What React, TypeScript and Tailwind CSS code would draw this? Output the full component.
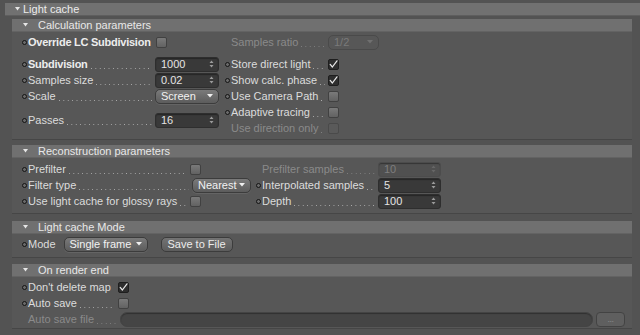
import React from "react";
import clsx from "clsx";

const Bullet = ({ show = true }: { show?: boolean }) => (
  <span className="flex w-[6px] shrink-0 items-center">
    {show && <span className="block h-[5px] w-[5px] rounded-full border border-[#141414] bg-[#6a6a6a]" />}
  </span>
);

interface LabelProps {
  text: string;
  className?: string;
  bold?: boolean;
  disabled?: boolean;
  leaders?: boolean;
}

// dotted leader line drawn as a repeating gradient, C4D style
const Label: React.FC<LabelProps> = ({ text, className, bold, disabled, leaders = true }) => (
  <div className={clsx("flex h-[13px] min-w-0 shrink-0 items-center whitespace-nowrap", className)}>
    <span
      className={clsx(
        "shrink-0",
        bold && "font-bold tracking-[-0.25px]",
        disabled ? "text-[#8a8a8a]" : bold ? "text-[#ededed]" : "text-[#dcdcdc]"
      )}
    >
      {text}
    </span>
    {leaders && (
      <span
        className={clsx(
          "mb-[2px] ml-[3px] mr-[3px] h-[1px] min-w-0 flex-1 self-end bg-[length:4.4px_1px] bg-repeat-x",
          disabled
            ? "bg-[linear-gradient(to_right,#808080_1px,transparent_1px)]"
            : "bg-[linear-gradient(to_right,#acacac_1px,transparent_1px)]"
        )}
      />
    )}
  </div>
);

const Spinner = ({ disabled }: { disabled?: boolean }) => (
  <svg width="5" height="8" viewBox="0 0 5 8" className="shrink-0">
    <path d="M2.5 0.5 L4.5 3 L0.5 3 Z M0.5 5 L4.5 5 L2.5 7.5 Z" fill={disabled ? "#666" : "#9c9c9c"} />
  </svg>
);

const NumField = ({ value, className, disabled }: { value: string; className?: string; disabled?: boolean }) => (
  <div
    className={clsx(
      "flex h-[15px] shrink-0 items-center justify-between rounded-[3px] border pl-[5px] pr-[4px] shadow-[inset_0_1px_1px_rgba(0,0,0,0.35)]",
      disabled ? "border-[#4c4c4c] bg-[#505050] text-[#7e7e7e]" : "border-[#2e2e2e] bg-[#393939] text-[#e4e4e4]",
      className
    )}
  >
    <span>{value}</span>
    <Spinner disabled={disabled} />
  </div>
);

const Caret = ({ color = "#f0f0f0" }: { color?: string }) => (
  <svg width="6" height="4" viewBox="0 0 6 4" className="shrink-0">
    <path d="M0 0 L6 0 L3 3.5 Z" fill={color} />
  </svg>
);

const Select = ({ value, className, disabled }: { value: string; className?: string; disabled?: boolean }) => (
  <div
    className={clsx(
      "flex h-[15px] shrink-0 items-center justify-between rounded-[5px] border pl-[5px] pr-[5px]",
      disabled
        ? "border-[#4a4a4a] bg-[#575757] text-[#7a7a7a]"
        : "border-[#3c3c3c] bg-gradient-to-b from-[#7a7a7a] to-[#5c5c5c] text-[#f2f2f2] shadow-[0_1px_0_rgba(255,255,255,0.08)]",
      className
    )}
  >
    <span>{value}</span>
    <Caret color={disabled ? "#707070" : "#f0f0f0"} />
  </div>
);

const Check = ({ checked, disabled, className }: { checked?: boolean; disabled?: boolean; className?: string }) => (
  <span
    className={clsx(
      "flex h-[11px] w-[11px] shrink-0 items-center justify-center rounded-[2px] border",
      checked
        ? "border-[#1e1e1e] bg-[#2e2e2e]"
        : disabled
          ? "border-[#4a4a4a] bg-[#5a5a5a]"
          : "border-[#414141] bg-gradient-to-b from-[#7a7a7a] to-[#626262]",
      className
    )}
  >
    {checked && (
      <svg width="9" height="8" viewBox="0 0 9 8">
        <path d="M1.2 4.4 L3.3 7 L8 0.8" stroke="#e8e8e8" strokeWidth="1.2" fill="none" strokeLinecap="round" />
      </svg>
    )}
  </span>
);

const Tri = () => (
  <svg width="5" height="4" viewBox="0 0 5 4" className="shrink-0">
    <path d="M0 0 L5 0 L2.5 3.5 Z" fill="#e6e6e6" />
  </svg>
);

const SectionHeader = ({ title }: { title: string }) => (
  <div className="flex h-[13px] items-center border-b border-[#636363] bg-[#707070] pl-[11px] text-[#e8e8e8]">
    <Tri />
    <span className="ml-[10px] leading-[13px]">{title}</span>
  </div>
);

const Row = ({ children, className }: { children: React.ReactNode; className?: string }) => (
  <div className={clsx("flex h-[16px] items-center", className)}>{children}</div>
);

export default function App() {
  return (
    <div className="h-[335px] w-[640px] overflow-hidden bg-[#535353] pt-[3px] font-['Liberation_Sans',Arial,sans-serif] text-[11px] leading-[13px]">
      {/* top level group */}
      <div className="ml-[5px] flex h-[13px] items-center border-b border-[#5e5e5e] bg-[#717171] pl-[10px] text-[#ececec]">
        <Tri />
        <span className="ml-[3px]">Light cache</span>
      </div>

      <div className="ml-[12px] w-[620px]">
        {/* Calculation parameters */}
        <div className="mt-[3px] border-b border-[#464646] bg-[#575757]">
          <SectionHeader title="Calculation parameters" />
          <div className="pl-[10px] pb-[3px] pt-[2px]">
            <Row>
              <div className="flex w-[197px] items-center">
                <Bullet />
                <Label text="Override LC Subdivision" bold leaders={false} />
                <Check className="ml-[5px]" />
              </div>
              <div className="ml-[6px] flex items-center">
                <Bullet show={false} />
                <Label text="Samples ratio" disabled className="w-[97px]" />
                <Select value="1/2" disabled className="w-[51px]" />
              </div>
            </Row>
            <div className="mt-[6px] grid grid-cols-[197px_1fr] grid-rows-[repeat(5,16px)] gap-x-[6px]">
              <Row>
                <Bullet />
                <Label text="Subdivision" bold className="w-[127px]" />
                <NumField value="1000" className="w-[64px]" />
              </Row>
              <Row>
                <Bullet />
                <Label text="Store direct light" className="w-[97px]" />
                <Check checked />
              </Row>
              <Row>
                <Bullet />
                <Label text="Samples size" className="w-[127px]" />
                <NumField value="0.02" className="w-[64px]" />
              </Row>
              <Row>
                <Bullet />
                <Label text="Show calc. phase" className="w-[97px]" />
                <Check checked />
              </Row>
              <Row>
                <Bullet />
                <Label text="Scale" className="w-[127px]" />
                <Select value="Screen" className="w-[64px]" />
              </Row>
              <Row>
                <Bullet />
                <Label text="Use Camera Path" className="w-[97px]" />
                <Check />
              </Row>
              <div className="row-span-2 flex items-center">
                <Bullet />
                <Label text="Passes" className="w-[127px]" />
                <NumField value="16" className="w-[64px]" />
              </div>
              <Row>
                <Bullet />
                <Label text="Adaptive tracing" className="w-[97px]" />
                <Check />
              </Row>
              <Row>
                <Bullet show={false} />
                <Label text="Use direction only" disabled className="w-[97px]" />
                <Check disabled />
              </Row>
            </div>
          </div>
        </div>

        {/* Reconstruction parameters */}
        <div className="mt-[5px] border-b border-[#464646] bg-[#575757]">
          <SectionHeader title="Reconstruction parameters" />
          <div className="pl-[10px] pb-[4px] pt-[3px]">
            <Row>
              <div className="flex w-[229px] items-center">
                <Bullet />
                <Label text="Prefilter" className="w-[162px]" />
                <Check />
              </div>
              <div className="ml-[5px] flex items-center">
                <Bullet show={false} />
                <Label text="Prefilter samples" disabled className="w-[116px]" />
                <NumField value="10" disabled className="w-[63px]" />
              </div>
            </Row>
            <Row>
              <div className="flex w-[229px] items-center">
                <Bullet />
                <Label text="Filter type" className="w-[164px]" />
                <Select value="Nearest" className="w-[59px]" />
              </div>
              <div className="ml-[5px] flex items-center">
                <Bullet />
                <Label text="Interpolated samples" className="w-[116px]" />
                <NumField value="5" className="w-[63px]" />
              </div>
            </Row>
            <Row>
              <div className="flex w-[229px] items-center">
                <Bullet />
                <Label text="Use light cache for glossy rays" className="w-[162px]" />
                <Check />
              </div>
              <div className="ml-[5px] flex items-center">
                <Bullet />
                <Label text="Depth" className="w-[116px]" />
                <NumField value="100" className="w-[63px]" />
              </div>
            </Row>
          </div>
        </div>

        {/* Light cache Mode */}
        <div className="mt-[7px] border-b border-[#464646] bg-[#575757]">
          <SectionHeader title="Light cache Mode" />
          <div className="pl-[10px] pb-[5px] pt-[2px]">
            <Row>
              <Bullet />
              <Label text="Mode" leaders={false} />
              <Select value="Single frame" className="ml-[8px] w-[84px]" />
              <div className="ml-[13px] flex h-[15px] w-[72px] items-center justify-center rounded-[5px] border border-[#3c3c3c] bg-gradient-to-b from-[#737373] to-[#5c5c5c] text-[#ececec]">
                Save to File
              </div>
            </Row>
          </div>
        </div>

        {/* On render end */}
        <div className="mt-[6px] border-b border-[#464646] bg-[#575757]">
          <SectionHeader title="On render end" />
          <div className="pl-[10px] pb-[1px] pt-[2px]">
            <Row>
              <Bullet />
              <Label text="Don't delete map" leaders={false} className="w-[90px]" />
              <Check checked />
            </Row>
            <Row>
              <Bullet />
              <Label text="Auto save" className="w-[90px]" />
              <Check />
            </Row>
            <Row>
              <Bullet show={false} />
              <Label text="Auto save file" disabled className="w-[92px]" />
              <div className="h-[15px] w-[473px] rounded-[7px] border border-[#444] bg-[#454545] shadow-[inset_0_1px_1px_rgba(0,0,0,0.3)]" />
              <div className="ml-[3px] flex h-[15px] w-[29px] items-center justify-center rounded-[4px] border border-[#434343] bg-[#5f5f5f] text-[9px] leading-none tracking-[-0.5px] text-[#8a8a8a]">
                ...
              </div>
            </Row>
          </div>
        </div>
      </div>
    </div>
  );
}
